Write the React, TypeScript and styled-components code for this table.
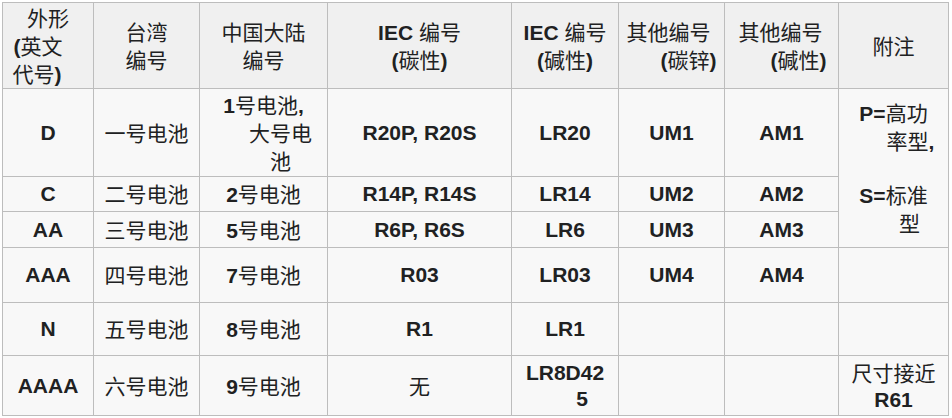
import React from "react";
import styled, { createGlobalStyle } from "styled-components";

const Global = createGlobalStyle`
  html, body { margin: 0; padding: 0; background: #ffffff; }
  body { font-family: "Liberation Sans", "Noto Sans CJK SC", sans-serif; }
`;

const Table = styled.table`
  margin: 2px 0 0 2px;
  border-collapse: collapse;
  table-layout: fixed;
  width: 947px;
  font-family: "Liberation Sans", "Noto Sans CJK SC", sans-serif;
  font-size: 21px;
  line-height: 26px;
  color: #202122;
`;

const Row = styled.tr<{ $h: number }>`
  height: ${(p) => p.$h}px;
`;

const HeadCell = styled.th`
  background: #f0f0f0;
  border: 1px solid #bdbdbd;
  padding: 0 4px;
  font-weight: 700;
  text-align: center;
  vertical-align: middle;
`;

const Cell = styled.td`
  background: #f8f8f8;
  border: 1px solid #bdbdbd;
  padding: 0 4px;
  font-weight: 700;
  text-align: center;
  vertical-align: middle;
`;

const Line = styled.span<{ $shift: number }>`
  display: block;
  white-space: nowrap;
  padding-left: ${(p) => (p.$shift > 0 ? p.$shift * 2 : 0)}px;
  padding-right: ${(p) => (p.$shift < 0 ? -p.$shift * 2 : 0)}px;
`;

const Blank = styled.span`
  display: block;
  height: 26px;
`;

const Han = styled.span`
  font-family: "Noto Sans CJK SC", sans-serif;
  font-weight: 400;
`;

type L = { t: string; s?: number };
type C = { lines: L[]; rowSpan?: number };

const mix = (text: string) => {
  const parts = text.split(/([\u3000-\u9fff]+)/).filter((x) => x.length > 0);
  return parts.map((p, i) =>
    /[\u3000-\u9fff]/.test(p) ? <Han key={i}>{p}</Han> : <React.Fragment key={i}>{p}</React.Fragment>
  );
};

const one = (t: string): C => ({ lines: [{ t }] });

const widths = [91, 106, 128, 184, 107, 106, 114, 110];

const header: C[] = [
  { lines: [{ t: "外形" }, { t: "(英文", s: -10 }, { t: "代号)", s: -11 }] },
  { lines: [{ t: "台湾" }, { t: "编号" }] },
  { lines: [{ t: "中国大陆" }, { t: "编号" }] },
  { lines: [{ t: "IEC 编号" }, { t: "(碳性)" }] },
  { lines: [{ t: "IEC 编号" }, { t: "(碱性)" }] },
  { lines: [{ t: "其他编号", s: -3 }, { t: "(碳锌)", s: 17 }] },
  { lines: [{ t: "其他编号", s: -1 }, { t: "(碱性)", s: 17 }] },
  { lines: [{ t: "附注" }] },
];

const rows: { h: number; cells: C[] }[] = [
  {
    h: 88,
    cells: [
      one("D"),
      one("一号电池"),
      { lines: [{ t: "1号电池," }, { t: "大号电", s: 17 }, { t: "池", s: 17 }] },
      one("R20P, R20S"),
      one("LR20"),
      one("UM1"),
      one("AM1"),
      {
        rowSpan: 3,
        lines: [{ t: "P=高功" }, { t: "率型,", s: 17 }, { t: "" }, { t: "S=标准" }, { t: "型", s: 16 }],
      },
    ],
  },
  {
    h: 35,
    cells: [one("C"), one("二号电池"), one("2号电池"), one("R14P, R14S"), one("LR14"), one("UM2"), one("AM2")],
  },
  {
    h: 36,
    cells: [one("AA"), one("三号电池"), one("5号电池"), one("R6P, R6S"), one("LR6"), one("UM3"), one("AM3")],
  },
  {
    h: 55,
    cells: [one("AAA"), one("四号电池"), one("7号电池"), one("R03"), one("LR03"), one("UM4"), one("AM4"), one("")],
  },
  {
    h: 53,
    cells: [one("N"), one("五号电池"), one("8号电池"), one("R1"), one("LR1"), one(""), one(""), one("")],
  },
  {
    h: 60,
    cells: [
      one("AAAA"),
      one("六号电池"),
      one("9号电池"),
      one("无"),
      { lines: [{ t: "LR8D42" }, { t: "5", s: 17 }] },
      one(""),
      one(""),
      { lines: [{ t: "尺寸接近" }, { t: "R61" }] },
    ],
  },
];

const renderLines = (c: C) =>
  c.lines.map((l, i) =>
    l.t === "" ? (
      c.lines.length > 1 ? <Blank key={i} /> : null
    ) : (
      <Line key={i} $shift={l.s ?? 0}>
        {mix(l.t)}
      </Line>
    )
  );

export default function App() {
  return (
    <>
      <Global />
      <Table>
        <colgroup>
          {widths.map((w, i) => (
            <col key={i} style={{ width: w }} />
          ))}
        </colgroup>
        <thead>
          <Row $h={86}>
            {header.map((c, i) => (
              <HeadCell key={i}>{renderLines(c)}</HeadCell>
            ))}
          </Row>
        </thead>
        <tbody>
          {rows.map((r, ri) => (
            <Row key={ri} $h={r.h}>
              {r.cells.map((c, ci) => (
                <Cell key={ci} rowSpan={c.rowSpan}>
                  {renderLines(c)}
                </Cell>
              ))}
            </Row>
          ))}
        </tbody>
      </Table>
    </>
  );
}
